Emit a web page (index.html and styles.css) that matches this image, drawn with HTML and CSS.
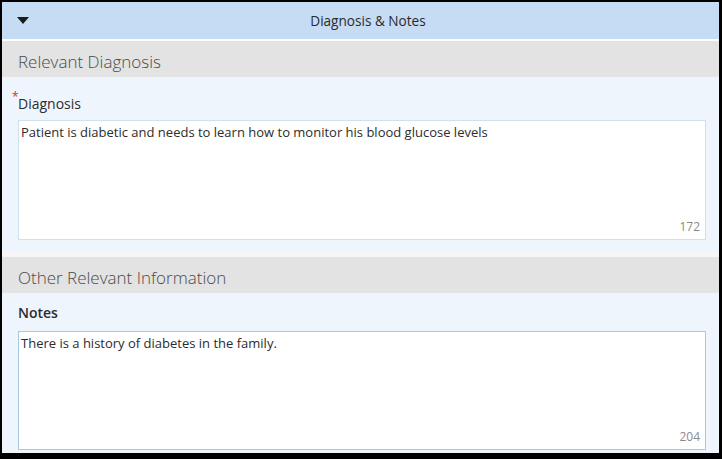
FILE: index.html
```html
<!DOCTYPE html>
<html>
<head>
<meta charset="utf-8">
<link rel="stylesheet" href="styles.css">
</head>
<body>
<div class="panel">
  <div class="header">
    <svg class="caret" width="12" height="7" viewBox="0 0 12 7"><path d="M0 0H12L6 7Z" fill="#1a1a1a"/></svg>
    <div class="header-title">Diagnosis &amp; Notes</div>
  </div>
  <div class="section-title">Relevant Diagnosis</div>
  <div class="section-body first">
    <div class="label"><span class="req">*</span>Diagnosis</div>
    <div class="textbox">Patient is diabetic and needs to learn how to monitor his blood glucose levels<span class="count">172</span></div>
  </div>
  <div class="separator"></div>
  <div class="section-title">Other Relevant Information</div>
  <div class="section-body second">
    <div class="label bold">Notes</div>
    <div class="textbox focus">There is a history of diabetes in the family.<span class="count">204</span></div>
  </div>
</div>
</body>
</html>
```
FILE: styles.css
```css
html, body {
  margin: 0;
  padding: 0;
  background: #000;
  font-family: "Open Sans", "Noto Sans", sans-serif;
}
.panel {
  margin: 2px 3px 0 2px;
  height: 451px;
  background: #eef5fd;
  overflow: hidden;
}
.header {
  height: 37px;
  background: #c5dcf4;
  border-bottom: 2px solid #fdfdfd;
  display: flex;
  align-items: center;
  padding-left: 15px;
}
.caret {
  display: block;
  flex: none;
}
.header-title {
  flex: 1;
  text-align: center;
  font-size: 13.6px;
  color: #2a2a2a;
  padding-right: 12px;
}
.section-title {
  height: 36px;
  box-sizing: border-box;
  padding-top: 4px;
  background: #e3e3e3;
  display: flex;
  align-items: center;
  padding-left: 16px;
  font-size: 17px;
  font-weight: 300;
  color: #4a4a4a;
}
.section-body {
  padding: 0 13px 11px 16px;
}
.section-body.first {
  padding-top: 17px;
}
.section-body.second {
  padding-top: 10px;
  padding-bottom: 2px;
}
.label {
  font-size: 14px;
  line-height: 20px;
  color: #2c2c2c;
  margin-bottom: 6px;
  position: relative;
}
.second .label {
  margin-bottom: 8px;
}
.label.bold {
  font-weight: 600;
}
.req {
  color: #e0282e;
  font-size: 12px;
  line-height: 12px;
  position: absolute;
  left: -6px;
  top: -3px;
}
.textbox {
  position: relative;
  background: #fff;
  border: 1px solid #cfe2ea;
  padding: 2px 2px;
  box-sizing: border-box;
  font-size: 13px;
  color: #2c2c2c;
  height: 120px;
}
.textbox.focus {
  border-color: #a9c8e4;
  height: 119px;
}
.count {
  position: absolute;
  right: 5px;
  bottom: 4px;
  font-size: 12px;
  color: #8a8a8a;
}
.separator {
  height: 6px;
  background: #f6f6f6;
}
```
